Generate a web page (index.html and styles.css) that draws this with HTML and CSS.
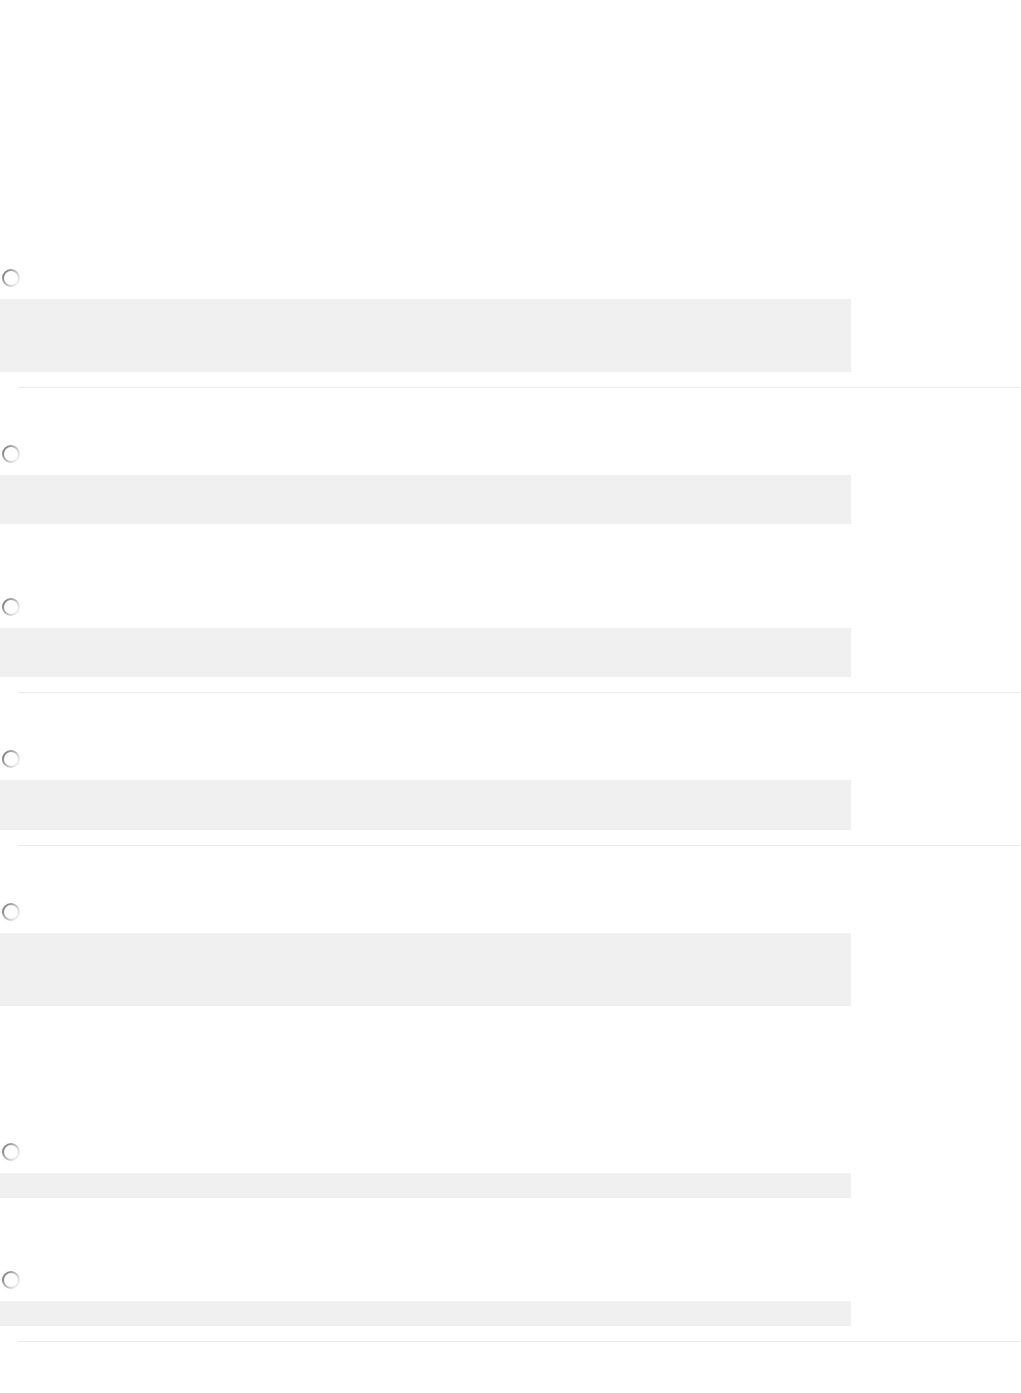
FILE: index.html
```html
<!DOCTYPE html>
<html>
<head>
<meta charset="utf-8">
<link rel="stylesheet" href="styles.css">
<title>Loading</title>
</head>
<body>
<main class="list">
  <section class="item">
    <svg class="spinner" width="22" height="22" viewBox="0 0 22 22"><defs><linearGradient id="g" x1="0" y1="0" x2="1" y2="0.6"><stop offset="0" stop-color="#727272"/><stop offset="0.5" stop-color="#b0b0b0"/><stop offset="1" stop-color="#ececec"/></linearGradient></defs><circle cx="11" cy="11" r="8" fill="none" stroke="url(#g)" stroke-width="2"/></svg>
    <div class="block h73"></div>
    <div class="divider"></div>
  </section>
  <section class="item wide">
    <svg class="spinner" width="22" height="22" viewBox="0 0 22 22"><circle cx="11" cy="11" r="8" fill="none" stroke="url(#g)" stroke-width="2"/></svg>
    <div class="block h49"></div>
    <div class="divider none"></div>
  </section>
  <section class="item">
    <svg class="spinner" width="22" height="22" viewBox="0 0 22 22"><circle cx="11" cy="11" r="8" fill="none" stroke="url(#g)" stroke-width="2"/></svg>
    <div class="block h49"></div>
    <div class="divider"></div>
  </section>
  <section class="item">
    <svg class="spinner" width="22" height="22" viewBox="0 0 22 22"><circle cx="11" cy="11" r="8" fill="none" stroke="url(#g)" stroke-width="2"/></svg>
    <div class="block h50"></div>
    <div class="divider"></div>
  </section>
  <section class="item extra">
    <svg class="spinner" width="22" height="22" viewBox="0 0 22 22"><circle cx="11" cy="11" r="8" fill="none" stroke="url(#g)" stroke-width="2"/></svg>
    <div class="block h73"></div>
    <div class="divider none"></div>
  </section>
  <section class="item">
    <svg class="spinner" width="22" height="22" viewBox="0 0 22 22"><circle cx="11" cy="11" r="8" fill="none" stroke="url(#g)" stroke-width="2"/></svg>
    <div class="block h25"></div>
    <div class="divider none"></div>
  </section>
  <section class="item">
    <svg class="spinner" width="22" height="22" viewBox="0 0 22 22"><circle cx="11" cy="11" r="8" fill="none" stroke="url(#g)" stroke-width="2"/></svg>
    <div class="block h25"></div>
    <div class="divider"></div>
  </section>
</main>
</body>
</html>
```

FILE: styles.css
```css
html, body {
  margin: 0;
  padding: 0;
  background: #ffffff;
  font-family: "Liberation Sans", Arial, sans-serif;
}

.list {
  padding-top: 267px;
  display: flex;
  flex-direction: column;
}

.item {
  display: flex;
  flex-direction: column;
  margin-bottom: 55px;
}

.item.wide {
  margin-bottom: 56px;
}

.item.extra {
  margin-bottom: 119px;
}

.spinner {
  display: block;
  width: 22px;
  height: 22px;
  margin-bottom: 10px;
}

.block {
  width: 851px;
  background: #f0f0f0;
}

.h73 { height: 73px; }
.h50 { height: 50px; }
.h49 { height: 49px; }
.h25 { height: 25px; }

.divider {
  margin-top: 15px;
  margin-left: 18px;
  margin-right: 1px;
  height: 1px;
  background: #ebebeb;
}

.divider.none {
  background: transparent;
}
```
